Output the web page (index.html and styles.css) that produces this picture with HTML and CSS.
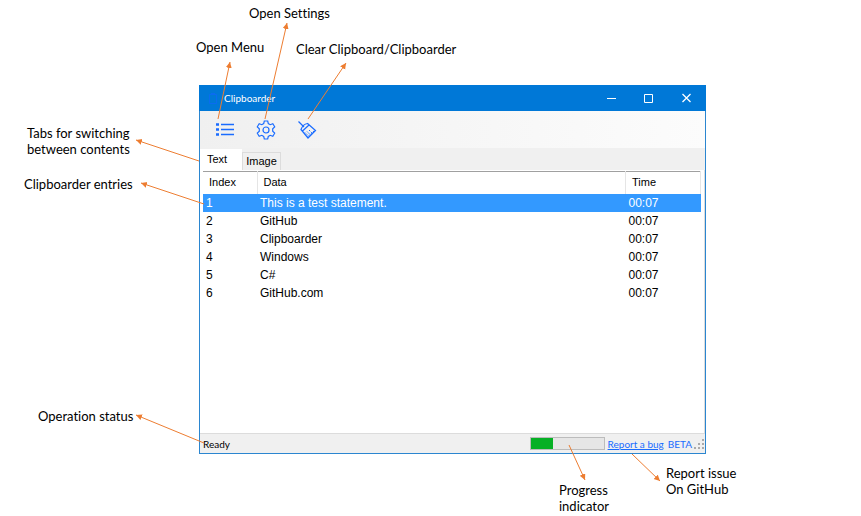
FILE: index.html
```html
<!DOCTYPE html>
<html lang="en">
<head>
<meta charset="utf-8">
<title>Clipboarder</title>
<link rel="stylesheet" href="styles.css">
</head>
<body>
<main class="guide">
  <section class="window">
    <header class="titlebar">
      <svg class="app-icon" width="10" height="13" viewBox="0 0 10 13"><path d="M1.500 2.500h7v9h-7zM3 1.500h4" /></svg>
      <h1 class="title">Clipboarder</h1>
      <button class="caption" type="button" aria-label="Minimize"><svg width="10" height="10" viewBox="0 0 10 10"><path d="M1 5.500h9"/></svg></button>
      <button class="caption" type="button" aria-label="Maximize"><svg width="10" height="10" viewBox="0 0 10 10"><path d="M.5 1.500h8v8h-8z"/></svg></button>
      <button class="caption" type="button" aria-label="Close"><svg width="10" height="10" viewBox="0 0 10 10"><path d="M.5 1l8 8M8.500 1l-8 8" stroke-width="1.300"/></svg></button>
    </header>
    <nav class="toolbar">
      <button class="tool" type="button" aria-label="Open menu"><svg width="20" height="20" viewBox="0 0 20 20"><path d="M6 4.500h13M6 9.500h13M6 14.500h13" stroke-width="1.600"/><path d="M1 4.500h3M1 9.500h3M1 14.500h3" stroke-width="2.400"/></svg></button>
      <button class="tool" type="button" aria-label="Open settings"><svg width="20" height="20" viewBox="0 0 20 20"><path d="M8.300 1h3.400l.6 2.600 1.900 1.100 2.600-.9 1.900 3-2 2v2.400l2 2-1.900 3-2.600-.9-1.900 1.100-.6 2.600H8.300l-.6-2.600-1.900-1.100-2.600.9-1.900-3 2-2V8.800l-2-2 1.900-3 2.600.9 1.900-1.100z"/><circle cx="10" cy="10" r="3"/></svg></button>
      <button class="tool" type="button" aria-label="Clear clipboard"><svg width="20" height="20" viewBox="0 0 20 20"><path d="M1.500 1.500L7 7"/><path d="M4 9.500C5 6.500 7 4 10.500 3.500L18.500 10.500 11 18zM5.500 11L12 5"/><path d="M8 12.500l3 3M10 11.500l3 3M12 10l3 3M10.500 17l7-6.500" stroke-width="1" stroke-dasharray="1.500 1"/></svg></button>
    </nav>
    <div class="tabs" role="tablist">
      <button class="tab tab-active" role="tab" aria-selected="true" type="button">Text</button>
      <button class="tab" role="tab" aria-selected="false" type="button">Image</button>
    </div>
    <div class="panel">
      <table class="entries">
        <thead><tr><th class="col-index">Index</th><th>Data</th><th class="col-time">Time</th></tr></thead>
        <tbody>
          <tr class="selected"><td>1</td><td>This is a test statement.</td><td>00:07</td></tr>
          <tr><td>2</td><td>GitHub</td><td>00:07</td></tr>
          <tr><td>3</td><td>Clipboarder</td><td>00:07</td></tr>
          <tr><td>4</td><td>Windows</td><td>00:07</td></tr>
          <tr><td>5</td><td>C#</td><td>00:07</td></tr>
          <tr><td>6</td><td>GitHub.com</td><td>00:07</td></tr>
        </tbody>
      </table>
    </div>
    <footer class="statusbar">
      <span class="status">Ready</span>
      <div class="progress" role="progressbar" aria-label="Progress" aria-valuenow="31"><div class="progress-fill" style="width:31%"></div></div>
      <a class="bug" href="#report">Report a bug</a>
      <span class="beta">BETA</span>
      <svg class="grip" width="10" height="10" viewBox="0 0 10 10"><path d="M8 0h2v2H8zM4 4h2v2H4zM8 4h2v2H8zM0 8h2v2H0zM4 8h2v2H4zM8 8h2v2H8z"/></svg>
    </footer>
  </section>

  <svg class="arrows" width="861" height="516" viewBox="0 0 861 516">
    <defs><marker id="head" markerUnits="userSpaceOnUse" markerWidth="7" markerHeight="7" refX="6" refY="3" orient="auto"><path d="M0 0l6 3-6 3z"/></marker></defs>
    <path class="arrow" d="M218 119L230 62"/>
    <path class="arrow" d="M265 119L287 23"/>
    <path class="arrow" d="M308 119L346 63"/>
    <path class="arrow" d="M199 161L136 140"/>
    <path class="arrow" d="M204 204L141 183"/>
    <path class="arrow" d="M204 443L136 415"/>
    <path class="arrow" d="M569 445L585 480"/>
    <path class="arrow" d="M632 454L660 481"/>
  </svg>
  <p class="note note-settings">Open Settings</p>
  <p class="note note-menu">Open Menu</p>
  <p class="note note-clear">Clear Clipboard/Clipboarder</p>
  <p class="note note-tabs">Tabs for switching<br>between contents</p>
  <p class="note note-entries">Clipboarder entries</p>
  <p class="note note-status">Operation status</p>
  <p class="note note-progress">Progress<br>indicator</p>
  <p class="note note-report">Report issue<br>On GitHub</p>
</main>
</body>
</html>
```

FILE: styles.css
```css
* { box-sizing: border-box; }

body {
  margin: 0;
  background: #fff;
  color: #000;
  font-family: "Liberation Sans", Arial, sans-serif;
  font-size: 11px;
}

button {
  padding: 0;
  border: 0;
  background: none;
  font: inherit;
  color: inherit;
}

svg { display: block; fill: none; }

.guide {
  position: relative;
  display: flex;
  min-height: 100vh;
  padding: 85px 155px 62px 199px;
}

/* Application window */
.window {
  flex: 1;
  display: flex;
  flex-direction: column;
  border: 1px solid #2b86d0;
  border-top: 0;
  background: #f0f0f0;
}

.titlebar {
  display: flex;
  align-items: center;
  height: 26px;
  margin: 0 -1px;
  padding-left: 9px;
  background: #0078d7;
  color: #fff;
}

.app-icon { stroke: #0a6cf0; }

.title {
  flex: 1;
  margin: 0 0 0 6px;
  font: 10px Lato, sans-serif;
}

.caption {
  display: grid;
  place-items: center;
  width: 38px;
  height: 26px;
}

.caption svg { stroke: #fff; }

.toolbar {
  display: flex;
  align-items: center;
  gap: 21px;
  height: 37px;
  padding-left: 15px;
  background: linear-gradient(90deg, #f0f0f0, #fcfcfc);
}

.tool svg { stroke: #1a6cff; stroke-width: 1.2; }

.tabs {
  display: flex;
  align-items: flex-end;
  height: 22px;
}

.tab {
  height: 18px;
  padding: 0 3px 2px;
  border: 1px solid #dcdcdc;
  border-bottom: 0;
}

.tab-active {
  height: 21px;
  padding: 0 14px 3px 6px;
  border-color: #fff;
  background: #fff;
}

.panel {
  flex: 1;
  padding: 1px 3px 0;
  border: 1px solid #dcdcdc;
  border-width: 0 1px 1px 0;
  background: #fff;
}

.entries {
  width: 100%;
  border-collapse: collapse;
  table-layout: fixed;
}

.entries thead { border-top: 1px solid #a0a0a0; }

.entries th {
  height: 22px;
  padding: 0 6px 2px;
  border-right: 1px solid #e5e5e5;
  font-weight: 400;
  text-align: left;
}

.entries td { height: 18px; padding: 0 3px; font-size: 12px; }
.col-index { width: 54px; }
.col-time { width: 75px; }
.selected { background: #3399ff; color: #fff; }

.statusbar {
  display: flex;
  align-items: center;
  height: 19px;
  padding: 0 1px 0 3px;
  font: 10px Lato, sans-serif;
}

.status { flex: 1; }

.progress {
  width: 75px;
  height: 13px;
  border: 1px solid #bcbcbc;
  background: #e6e6e6;
}

.progress-fill { height: 100%; background: #06b025; }

.bug { margin-left: 3px; color: #1a6cff; }
.beta { margin: 0 2px 0 4px; color: #1a6cff; }
.grip { fill: #aaa; }

/* Callouts */
.arrows { position: absolute; top: 0; left: 0; pointer-events: none; }
.arrow { stroke: #ed7d31; marker-end: url(#head); }
.arrows marker path { fill: #ed7d31; }

.note {
  position: absolute;
  margin: 0;
  font: 13px/16px Lato, sans-serif;
  font-variant-ligatures: none;
  white-space: nowrap;
}

.note-settings { top: 5px; left: 249px; }
.note-menu { top: 39px; left: 196px; }
.note-clear { top: 41px; left: 296px; }
.note-tabs { top: 125px; left: 27px; }
.note-entries { top: 176px; left: 24px; }
.note-status { top: 408px; left: 38px; }
.note-progress { top: 482px; left: 559px; }
.note-report { top: 465px; left: 666px; }
```
